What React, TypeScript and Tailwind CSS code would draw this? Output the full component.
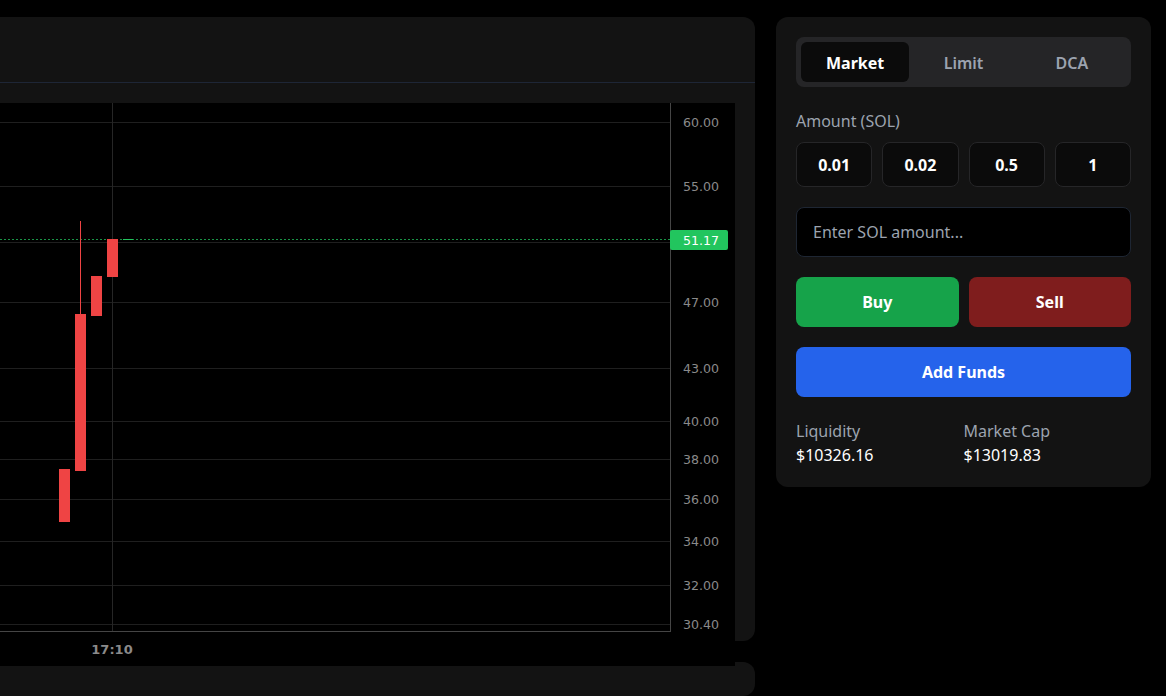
import { useState } from "react";

const prices = [
    { y: 19, label: "60.00" },
    { y: 83, label: "55.00" },
    { y: 199, label: "47.00" },
    { y: 265, label: "43.00" },
    { y: 318, label: "40.00" },
    { y: 356, label: "38.00" },
    { y: 396, label: "36.00" },
    { y: 438, label: "34.00" },
    { y: 482, label: "32.00" },
    { y: 521, label: "30.40" },
];

const candles = [
    { x: 59, top: 366, bottom: 419 },
    { x: 75, top: 211, bottom: 368, wick: 118 },
    { x: 91, top: 173, bottom: 213 },
    { x: 107, top: 136, bottom: 174 },
];

function PriceChart() {
    return (
        <svg width="735" height="563" className="block" style={{ fontFamily: "'DejaVu Sans', sans-serif" }}>
            <rect x="0" y="0" width="735" height="563" fill="#000" />
            {/* grid */}
            {[...prices.map((p) => p.y), 139].map((y) => (
                <line key={y} x1="0" x2="670" y1={y + 0.5} y2={y + 0.5} stroke="#1f1f1f" />
            ))}
            <line x1="112.5" x2="112.5" y1="0" y2="528" stroke="#262626" />
            {/* current price */}
            <line x1="0" x2="670" y1="136.5" y2="136.5" stroke="#22c55e" strokeOpacity="0.75" strokeDasharray="2 2" shapeRendering="crispEdges" />
            <line x1="123" x2="133" y1="136.5" y2="136.5" stroke="#22c55e" shapeRendering="crispEdges" />
            {candles.map((c) => (
                <g key={c.x}>
                    {c.wick && <line x1={c.x + 5.5} x2={c.x + 5.5} y1={c.wick} y2={c.top} stroke="#ef4444" />}
                    <rect x={c.x} y={c.top} width="11" height={c.bottom - c.top} fill="#ef4444" />
                </g>
            ))}
            {/* scale borders */}
            <line x1="670.5" x2="670.5" y1="0" y2="528" stroke="#454545" />
            <line x1="0" x2="671" y1="528.5" y2="528.5" stroke="#454545" />
            {prices.map((p) => (
                <text key={p.label} x="683" y={p.y + 4.5} fontSize="12.6" fill="#8a8a8a">
                    {p.label}
                </text>
            ))}
            <rect x="670" y="127" width="58" height="20" rx="2" fill="#22c55e" />
            <text x="683" y="141.5" fontSize="12.6" fill="#fff">51.17</text>
            <text x="112" y="551" fontSize="13" fontWeight="600" fill="#8a8a8a" textAnchor="middle">17:10</text>
        </svg>
    );
}

function TradePanel() {
    const [tab, setTab] = useState("Market");
    const tabs = ["Market", "Limit", "DCA"];
    const amounts = ["0.01", "0.02", "0.5", "1"];

    return (
        <div className="w-[375px] shrink-0 self-start bg-[#131313] rounded-xl p-5">
            <div className="grid grid-cols-3 bg-[#252527] rounded-lg p-[5px] h-[50px]">
                {tabs.map((t) => (
                    <button
                        key={t}
                        onClick={() => setTab(t)}
                        className={tab === t
                            ? "bg-[#0b0b0b] rounded-md text-white font-bold text-base pt-0.5"
                            : "text-[#9ca3af] font-semibold text-base pt-0.5"}
                    >
                        {t}
                    </button>
                ))}
            </div>
            <p className="mt-[22px] text-base leading-6 text-[#9ca3af]">Amount (SOL)</p>
            <div className="mt-[9px] grid grid-cols-4 gap-[10px]">
                {amounts.map((a) => (
                    <button key={a} className="h-[45px] bg-[#0b0b0b] border border-[#262628] rounded-lg text-white font-bold text-base">
                        {a}
                    </button>
                ))}
            </div>
            <input
                placeholder="Enter SOL amount..."
                className="mt-5 w-full h-[50px] bg-black border border-[#1e2633] rounded-lg px-4 text-base text-white placeholder:text-[#9ca3af] outline-none"
            />
            <div className="mt-5 grid grid-cols-2 gap-[10px]">
                <button className="h-[50px] bg-[#16a34a] rounded-lg text-white font-bold text-base">Buy</button>
                <button className="h-[50px] bg-[#7f1d1d] rounded-lg text-white font-bold text-base">Sell</button>
            </div>
            <button className="mt-5 w-full h-[50px] bg-[#2563eb] rounded-lg text-white font-bold text-base">Add Funds</button>
            <div className="mt-[22px] grid grid-cols-2 text-base leading-6">
                <div>
                    <p className="text-[#9ca3af]">Liquidity</p>
                    <p className="text-white">$10326.16</p>
                </div>
                <div>
                    <p className="text-[#9ca3af]">Market Cap</p>
                    <p className="text-white">$13019.83</p>
                </div>
            </div>
        </div>
    );
}

export default function App() {
    return (
        <div className="h-[696px] overflow-hidden bg-black flex gap-[21px] pt-[17px]" style={{ fontFamily: "'Noto Sans', sans-serif" }}>
            <div className="-ml-6 w-[779px] shrink-0 flex flex-col gap-[21px]">
                <div className="h-[624px] bg-[#131313] rounded-xl">
                    <div className="h-[66px] border-b border-[#1e2636]" />
                    <div className="relative z-10 pl-6 pt-5 pr-5">
                        <PriceChart />
                    </div>
                </div>
                <div className="h-[200px] bg-[#131313] rounded-xl" />
            </div>
            <TradePanel />
        </div>
    );
}
